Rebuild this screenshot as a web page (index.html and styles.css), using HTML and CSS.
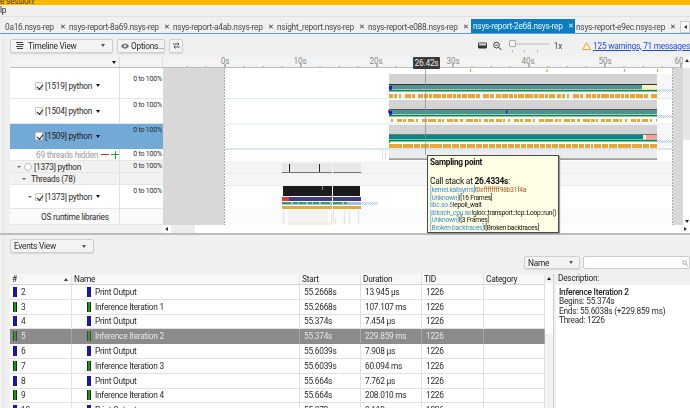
FILE: index.html
```html
<!DOCTYPE html>
<html lang="en">
<head>
<meta charset="utf-8">
<title>Nsight Systems</title>
<link rel="stylesheet" href="styles.css">
</head>
<body>
<div class="app">
  <div class="titlebar"><span>e session!</span></div>
  <div class="menubar">lp</div>
  <div class="tabs">
    <div class="tab t1"><span>0a16.nsys-rep</span><i>✕</i></div>
    <div class="tab t2"><span>nsys-report-8a69.nsys-rep</span><i>✕</i></div>
    <div class="tab t2"><span>nsys-report-a4ab.nsys-rep</span><i>✕</i></div>
    <div class="tab t3"><span>nsight_report.nsys-rep</span><i>✕</i></div>
    <div class="tab t2"><span>nsys-report-e088.nsys-rep</span><i>✕</i></div>
    <div class="tab active"><span>nsys-report-2e68.nsys-rep</span><i>✕</i></div>
    <div class="tab t2"><span>nsys-report-e9ec.nsys-rep</span><i>✕</i></div>
    <div class="tabnext"><b class="caret-left"></b></div>
  </div>
  <div class="main">
    <div class="toolbar">
      <div class="btn timeline-btn">
        <svg class="ic" width="8" height="7" viewBox="0 0 8 7"><path d="M0 .5h7M1 2.500h7M0 4.500h7M1 6.500h6" stroke="#444" fill="none"/></svg>
        <span>Timeline View</span><b class="caret"></b>
      </div>
      <div class="btn options-btn">
        <svg class="ic" width="8" height="6" viewBox="0 0 8 6"><path d="M0 3c2-3.500 6-3.500 8 0-2 3.500-6 3.500-8 0z" fill="#777"/><circle cx="4" cy="3" r="1.200" fill="#eee"/></svg>
        <span>Options...</span>
      </div>
      <div class="btn swap-btn">
        <svg width="7" height="7" viewBox="0 0 7 7"><path d="M0 2h6M4.500.5 6 2 4.500 3.500M7 5H1M2.500 3.500 1 5l1.500 1.500" stroke="#333" stroke-width=".8" fill="none"/></svg>
      </div>
      <div class="tool-right">
        <svg width="10" height="7" viewBox="0 0 10 7"><rect width="10" height="7" rx="1.500" fill="#333"/><rect x="1" y="1" width="8" height="2.500" fill="#ccc"/></svg>
        <svg class="mag" width="10" height="10" viewBox="0 0 10 10"><circle cx="4" cy="4" r="3.200" fill="#fff" stroke="#222"/><path d="M2.500 4h3M6.500 6.500 9.500 9.500" stroke="#222" stroke-width="1.100"/></svg>
        <div class="slider"><span class="knob"></span><span class="ticks"></span></div>
        <span class="zoomx">1x</span>
        <svg class="warn" width="9" height="8" viewBox="0 0 9 8"><path d="M4.500.7 8.500 7.500H.5z" fill="#fff3d6" stroke="#e8a33a"/></svg>
        <a class="warnlink">125 warnings, 71 messages</a>
      </div>
    </div>
    <div class="timeline">
      <div class="tl-left">
        <div class="tl-head"><div class="hc1"><b class="caret dark"></b></div><div class="hc2"></div></div>
        <div class="tl-gap"><div></div><div></div></div>
        <div class="row h26"><div class="lab ind35"><span class="cb"></span><span>[1519] python</span><b class="caret dark"></b></div><div class="pct">0 to 100%</div></div>
        <div class="row h25"><div class="lab ind35"><span class="cb"></span><span>[1504] python</span><b class="caret dark"></b></div><div class="pct">0 to 100%</div></div>
        <div class="row h25 sel"><div class="lab ind35"><span class="cb"></span><span>[1509] python</span><b class="caret dark"></b></div><div class="pct">0 to 100%</div></div>
        <div class="row h12"><div class="lab hiddenrow"><span>69 threads hidden</span><span class="minus"></span><span class="plus"></span></div><div class="pct">0 to 100%</div></div>
        <div class="row h12 alt"><div class="lab ind17"><b class="caret small"></b><span class="radio"></span><span>[1373] python</span></div><div class="pct">0 to 100%</div></div>
        <div class="row h12 alt"><div class="lab ind23"><b class="caret small"></b><span>Threads (78)</span></div><div class="pct"></div></div>
        <div class="row h24"><div class="lab ind28"><b class="caret small"></b><span class="cb"></span><span>[1373] python</span><b class="caret dark"></b></div><div class="pct">0 to 100%</div></div>
        <div class="row h16 pale"><div class="lab ind41"><span>OS runtime libraries</span></div><div class="pct"></div></div>
      </div>
      <svg class="canvas" width="520" height="168" viewBox="163 57 520 168">
        <defs>
          <pattern id="chk" width="2" height="2" patternUnits="userSpaceOnUse"><rect width="2" height="2" fill="#eef4f9"/><rect width="1" height="1" fill="#b9d2e6"/><rect x="1" y="1" width="1" height="1" fill="#b9d2e6"/></pattern>
        </defs>
        <rect x="163" y="57" width="520" height="168" fill="#fff"/>
        <rect x="163" y="57" width="520" height="11" fill="#f3f3f3"/>
        <path d="M163 67.500h520" stroke="#bdbdbd"/>
        <path d="M187 67v-1M206 67v-1M244 67v-1M263 67v-1M282 67v-1M320 67v-1M339 67v-1M358 67v-1M396 67v-1M415 67v-1M434 67v-1M472 67v-1M491 67v-1M510 67v-1M548 67v-1M567 67v-1M586 67v-1M624 67v-1M643 67v-1M662 67v-1" stroke="#9a9a9a"/>
        <path d="M225 67v-3M301 67v-3M377 67v-3M453 67v-3M529 67v-3M605 67v-3M681 67v-3" stroke="#777"/>
        <g class="ax">
          <text x="225" y="63.500" text-anchor="middle">0s</text>
          <text x="300" y="63.500" text-anchor="middle">10s</text>
          <text x="376" y="63.500" text-anchor="middle">20s</text>
          <text x="453" y="63.500" text-anchor="middle">30s</text>
          <text x="528" y="63.500" text-anchor="middle">40s</text>
          <text x="605" y="63.500" text-anchor="middle">50s</text>
          <text x="679" y="63.500" text-anchor="middle">60</text>
        </g>
        <rect x="163" y="68" width="61" height="157" fill="#d8d8d8"/>
        <rect x="673" y="68" width="10" height="157" fill="#d8d8d8"/>
        <path d="M224.500 68v157M672.500 68v157" stroke="#a8a8a8" stroke-dasharray="2 1"/>
        <rect x="225" y="161" width="447" height="24" fill="#f5f5f5"/>
        <rect x="225" y="209" width="447" height="16" fill="#fbfbfb"/>
        <rect x="657" y="74" width="15" height="24" fill="#f7f7f7"/>
        <rect x="657" y="125" width="15" height="23" fill="#f7f7f7"/>
        <path d="M225 98.500h447M225 124h447" stroke="#e3e9f0"/>
        <path d="M225 149h447" stroke="#dbe5ef" stroke-width="2"/>
        <path d="M225 173.500h447M225 185.500h447" stroke="#ececec"/>
        <path d="M470.500 69v3M547 69v3M624.500 69v3M657.500 69v3" stroke="#e8a838" stroke-width="1.300"/>
        <rect x="389" y="74" width="268" height="10" fill="#d4d4d4"/>
        <rect x="389" y="84" width="268" height="1" fill="#333"/>
        <rect x="389" y="85" width="268" height="4.500" fill="#4e9394"/>
        <rect x="642" y="85" width="15" height="4.500" fill="#fbeec4"/>
        <rect x="389" y="90" width="268" height="1.500" fill="#0d8a3c"/>
        <rect x="657" y="89" width="15" height="3" fill="url(#chk)"/>
        <path d="M389 86v3l1.500 1.500L392 89v-3z" fill="#1616e0"/>
        <path d="M389 96h268" stroke="#e8a838" stroke-width="4" stroke-dasharray="4 1 3 2 2 4 6 1 3 3 5 1 4 1 3 1 8 1 4 1 5 1 3 1 4 1 5 1 7 1 4 3 6 1 4 2 5 1 6 1 4 1 3 1 6 1 8 1 4 1 5 1 3 1 6 2"/>
        <rect x="389" y="100" width="268" height="9" fill="#d4d4d4"/>
        <rect x="389" y="109" width="268" height="1" fill="#555"/>
        <rect x="389" y="110" width="268" height="4.500" fill="#4e9394"/>
        <rect x="389" y="115" width="268" height="1.500" fill="#0d8a3c"/>
        <rect x="657" y="115" width="15" height="3" fill="url(#chk)"/>
        <rect x="388" y="110" width="2" height="3" fill="#e03030"/>
        <path d="M389 111v3l1.500 1.500L392 114v-3z" fill="#1616e0"/>
        <rect x="506" y="110.500" width="1.300" height="3" fill="#1616e0"/>
        <path d="M391 120.500h266" stroke="#e8a838" stroke-width="3" stroke-dasharray="2 4 5 1 3 2 6 2 2 4 5 1 8 2 3 1 2 3 6 1 4 2 3 3 7 1 4 1 2 3 4 1 5 2 6 1 2 3"/>
        <rect x="389" y="125" width="268" height="9" fill="#d4d4d4"/>
        <rect x="389" y="134" width="268" height="1" fill="#777"/>
        <rect x="389" y="135" width="268" height="4.500" fill="#008a8a"/>
        <rect x="643" y="135" width="3" height="4.500" fill="#fbeec4"/>
        <rect x="646" y="135" width="11" height="4.500" fill="#f8a0a0"/>
        <rect x="389" y="140" width="268" height="1.500" fill="#0d8a3c"/>
        <rect x="389" y="140" width="1" height="3" fill="#0d8a3c"/>
        <rect x="657" y="140" width="15" height="3" fill="url(#chk)"/>
        <path d="M389 146h268" stroke="#e8a838" stroke-width="4" stroke-dasharray="13 1 10 1 6 1 8 1 12 1 8 1 7 1 6 1 8 1 6 1 5 1 6 1 5 1 5 1 6 1 5 1 5 1 6 1 5 1 5 1 5 1 6 1 6 1 5 1 6 1 5 1 5 1 2 1 7 1 6 1 8 1"/>
        <rect x="389" y="150" width="268" height="8.500" fill="#ececec"/>
        <rect x="389" y="158.500" width="268" height="1.200" fill="#777"/>
        <path d="M382.500 150v9M385.500 150v9" stroke="#e2e2e2"/>
        <rect x="282" y="163" width="50" height="9" fill="#e8e8e8"/>
        <rect x="333" y="163" width="28" height="9" fill="#e8e8e8"/>
        <rect x="282" y="172" width="50" height="1" fill="#777"/>
        <rect x="333" y="172" width="28" height="1" fill="#777"/>
        <path d="M289.500 164v8M319.500 164v8" stroke="#222"/>
        <rect x="283" y="186" width="49" height="10" fill="#1c1c1c"/>
        <rect x="333" y="186" width="27" height="10" fill="#1c1c1c"/>
        <rect x="322" y="186" width="1" height="4" fill="#888"/>
        <rect x="282" y="197" width="50" height="4" fill="#3e3a8c"/>
        <rect x="333" y="197" width="28" height="4" fill="#3e3a8c"/>
        <rect x="282" y="197" width="7" height="4" fill="#e83434"/>
        <rect x="282" y="202" width="50" height="3" fill="#9cc4dc"/>
        <rect x="333" y="202" width="28" height="3" fill="#9cc4dc"/>
        <path d="M282 203h50M333 203h14" stroke="#0f9040" stroke-width="1.500" stroke-dasharray="9 2 5 1 7 2 4 1 6 2"/>
        <rect x="361" y="202" width="17" height="3" fill="url(#chk)"/>
        <rect x="282" y="206" width="50" height="3" fill="#e8a838"/>
        <rect x="333" y="206" width="28" height="3" fill="#e8a838"/>
        <path d="M283.500 210v14M333.500 210v14M344.500 210v14M349.500 210v14M358.500 210v14" stroke="#e6e6e6" stroke-width="1.500"/>
        <rect x="288" y="210" width="40" height="14" fill="#f4f3f1"/>
        <path d="M288 224h44" stroke="#efe6d6"/>
        <path d="M331.500 224v-11M335.500 224v-5" stroke="#efe4d2"/>
        <path d="M425.500 68v87" stroke="#8a8a8a" stroke-width=".7"/>
      </svg>
      <div class="vscroll">
        <b class="up"></b>
        <div class="vthumb"></div>
        <b class="down"></b>
      </div>
      <div class="timebadge">26.42s</div>
      <div class="tooltip">
        <div class="tt-title">Sampling point</div>
        <div class="tt-head">Call stack at <b>26.4334s</b>:</div>
        <div class="tt-line"><a>[kernel.kallsyms]</a>!<em>0xffffffff98b31f4a</em></div>
        <div class="tt-line"><a>[Unknown]</a>![16 Frames]</div>
        <div class="tt-line"><a>libc.so.6</a>!epoll_wait</div>
        <div class="tt-line"><a>libtorch_cpu.so</a>!gloo::transport::tcp::Loop::run()</div>
        <div class="tt-line"><a>[Unknown]</a>![3 Frames]</div>
        <div class="tt-line"><a>[Broken backtraces]</a>![Broken backtraces]</div>
      </div>
    </div>
    <div class="hscroll">
      <div class="hs-blank"></div>
      <b class="caret-left"></b>
      <div class="hs-thumb"></div>
      <div class="hs-track"></div>
      <b class="caret-right"></b>
    </div>
    <div class="splitter"></div>
    <div class="events-bar">
      <div class="btn events-btn"><span>Events View</span><b class="caret"></b></div>
      <div class="filter-bar">
        <div class="btn name-btn"><span>Name</span><b class="caret"></b></div>
        <div class="search"><svg width="6" height="6" viewBox="0 0 6 6"><circle cx="2.500" cy="2.500" r="1.800" fill="none" stroke="#9ab"/><path d="M4 4l2 2" stroke="#9ab"/></svg></div>
      </div>
    </div>
    <div class="lower">
      <div class="table">
        <div class="tr th"><div class="c0">#<b class="sort"></b></div><div class="c1">Name</div><div class="c2">Start</div><div class="c3">Duration</div><div class="c4">TID</div><div class="c5">Category</div></div>
        <div class="tr"><div class="c0"><span class="ev blue"></span>2</div><div class="c1"><span class="ev blue"></span>Print Output</div><div class="c2">55.2668s</div><div class="c3">13.945 μs</div><div class="c4">1226</div><div class="c5"></div></div>
        <div class="tr"><div class="c0"><span class="ev green"></span>3</div><div class="c1"><span class="ev green"></span>Inference Iteration 1</div><div class="c2">55.2668s</div><div class="c3">107.107 ms</div><div class="c4">1226</div><div class="c5"></div></div>
        <div class="tr"><div class="c0"><span class="ev blue"></span>4</div><div class="c1"><span class="ev blue"></span>Print Output</div><div class="c2">55.374s</div><div class="c3">7.454 μs</div><div class="c4">1226</div><div class="c5"></div></div>
        <div class="tr selrow"><div class="c0"><span class="ev green"></span>5</div><div class="c1"><span class="ev green"></span>Inference Iteration 2</div><div class="c2">55.374s</div><div class="c3">229.859 ms</div><div class="c4">1226</div><div class="c5"></div></div>
        <div class="tr"><div class="c0"><span class="ev blue"></span>6</div><div class="c1"><span class="ev blue"></span>Print Output</div><div class="c2">55.6039s</div><div class="c3">7.908 μs</div><div class="c4">1226</div><div class="c5"></div></div>
        <div class="tr"><div class="c0"><span class="ev green"></span>7</div><div class="c1"><span class="ev green"></span>Inference Iteration 3</div><div class="c2">55.6039s</div><div class="c3">60.094 ms</div><div class="c4">1226</div><div class="c5"></div></div>
        <div class="tr"><div class="c0"><span class="ev blue"></span>8</div><div class="c1"><span class="ev blue"></span>Print Output</div><div class="c2">55.664s</div><div class="c3">7.762 μs</div><div class="c4">1226</div><div class="c5"></div></div>
        <div class="tr"><div class="c0"><span class="ev green"></span>9</div><div class="c1"><span class="ev green"></span>Inference Iteration 4</div><div class="c2">55.664s</div><div class="c3">208.010 ms</div><div class="c4">1226</div><div class="c5"></div></div>
        <div class="tr"><div class="c0"><span class="ev blue"></span>10</div><div class="c1"><span class="ev blue"></span>Print Output</div><div class="c2">55.872s</div><div class="c3">8.112 μs</div><div class="c4">1226</div><div class="c5"></div></div>
      </div>
      <div class="tscroll"><b class="up"></b><div class="tthumb"></div><div class="ttrack"></div></div>
      <div class="desc">
        <div class="desc-head">Description:</div>
        <div class="desc-body">
          <div class="desc-title">Inference Iteration 2</div>
          <div>Begins: 55.374s</div>
          <div>Ends: 55.6038s (+229.859 ms)</div>
          <div>Thread: 1226</div>
        </div>
      </div>
    </div>
  </div>
</div>
</body>
</html>
```
FILE: styles.css
```css
* { box-sizing: border-box; }
html, body { margin: 0; padding: 0; height: 100%; overflow: hidden; }
body { background: #f0f0f0; font-family: Roboto, "Liberation Sans", sans-serif; font-size: 8.300px; letter-spacing: -.24px; color: #2a2a2a; }
.app { width: 690px; height: 408px; display: flex; flex-direction: column; overflow: hidden; filter: blur(.3px); }

.titlebar { height: 5px; background: #ffb900; overflow: hidden; line-height: 2px; color: #4a3a10; flex: none; }
.menubar { height: 12px; line-height: 10px; color: #222; border-bottom: 1px solid #e2e2e2; flex: none; }

.tabs { height: 17px; flex: none; display: flex; align-items: stretch; padding-top: 4px; border-bottom: 1px solid #5f9fcf; overflow: hidden; }
.tab { display: flex; align-items: center; color: #4a4a4a; flex: none; white-space: nowrap; }
.tab i { font-style: normal; font-size: 6.500px; color: #333; margin-left: 5px; }
.t1 { width: 69px; padding-left: 5px; }
.t2 { width: 104px; }
.t3 { width: 91px; }
.t1 i { margin-left: 6px; }
.tab.active { width: 104px; padding-left: 2px; margin-top: -2px; background: #0b7dc2; color: #eef7ff; margin-left: -1px; margin-right: 1px; }
.tab.active i { color: #eef7ff; }
.tabnext { width: 10px; margin-left: auto; background: #fafafa; border: 1px solid #ccc; display: flex; align-items: center; justify-content: center; flex: none; }

.main { flex: 1; position: relative; padding-left: 10px; min-height: 0; background: linear-gradient(#e4e4e4, #e4e4e4) 3px 0 / 1px 100% no-repeat; }
.toolbar { height: 23px; display: flex; align-items: center; gap: 4px; }
.btn { height: 14px; display: flex; align-items: center; background: #f3f3f3; border: 1px solid #cfcfcf; border-radius: 2px; box-shadow: 0 1px 1px #d8d8d8; color: #2a2a2a; }
.timeline-btn { width: 103px; padding: 0 7px 0 5px; }
.timeline-btn .ic { margin-right: 4px; }
.timeline-btn .caret { margin-left: auto; }
.options-btn { width: 48px; padding-left: 3px; }
.options-btn .ic { margin-right: 2px; }
.swap-btn { width: 14px; justify-content: center; }
.tool-right { margin-left: auto; display: flex; align-items: center; width: 212px; white-space: nowrap; overflow: hidden; }
.mag { margin-left: 6px; }
.slider { position: relative; width: 45px; height: 12px; margin-left: 7px; background: linear-gradient(#d6d6d6, #d6d6d6) center 3px / 100% 2px no-repeat; }
.knob { position: absolute; left: 0; top: 0; width: 7px; height: 7px; background: #f6f6f6; border: 1px solid #aaa; border-radius: 1px; }
.ticks { position: absolute; left: 3px; right: 3px; bottom: 0; height: 2px; background: repeating-linear-gradient(90deg, #aaa 0 1px, transparent 1px 12.400px); }
.zoomx { margin-left: 5px; color: #444; }
.warn { margin-left: 20px; flex: none; }
.warnlink { margin-left: 2px; color: #1f4fd8; text-decoration: underline; }

.timeline { position: relative; height: 168px; display: flex; background: #fff; }
.tl-left { width: 153px; flex: none; display: flex; flex-direction: column; background: #fff; }
.tl-head { height: 11px; display: flex; background: #f3f3f3; border-bottom: 1px solid #bdbdbd; }
.hc1 { width: 110px; border-right: 1px solid #dcdcdc; display: flex; align-items: center; justify-content: flex-end; padding-right: 3px; }
.hc2 { flex: 1; border-right: 1px solid #dcdcdc; }
.tl-gap { height: 5px; display: flex; }
.tl-gap div:first-child { width: 110px; border-right: 1px solid #e4e4e4; }
.row { display: flex; border-bottom: 1px solid #e6e6e6; flex: none; }
.h26 { height: 26px; } .h25 { height: 25px; } .h12 { height: 12px; } .h24 { height: 24px; } .h16 { height: 16px; }
.lab { width: 110px; flex: none; display: flex; align-items: center; border-right: 1px solid #e0e0e0; white-space: nowrap; }
.pct { flex: 1; text-align: right; font-size: 7px; letter-spacing: -.2px; line-height: 9px; padding: 2px 1px 0 0; }
.row.h12 .pct { padding-top: 1px; }
.sel { background: #73a9d6; border-bottom-color: #73a9d6; }
.sel .lab { border-right-color: #73a9d6; color: #222; }
.alt { background: #f2f2f2; }
.pale { background: #fafafa; }
.ind35 { padding-left: 25px; }
.ind17 { padding-left: 7px; }
.ind23 { padding-left: 12px; }
.ind28 { padding-left: 18px; }
.ind41 { padding-left: 31px; }
.cb { width: 8px; height: 8px; margin-right: 2px; flex: none; background: #fff; border: 1px solid #c4c4c4; border-radius: 1px; position: relative; }
.cb::after { content: ""; position: absolute; left: 2px; top: 0; width: 2.500px; height: 5px; border: solid #111; border-width: 0 1.200px 1.200px 0; transform: rotate(38deg); }
.radio { width: 8px; height: 8px; margin: 0 2px 0 0; border-radius: 50%; background: #fff; border: 1px solid #bbb; flex: none; }
.hiddenrow { padding-left: 26px; color: #9a9a9a; }
.minus { width: 8px; height: 1px; background: #d8261c; margin-left: 3px; }
.plus { width: 8px; height: 8px; margin-left: 2px; background: linear-gradient(#2e9e3e, #2e9e3e) center / 100% 1px no-repeat, linear-gradient(#2e9e3e, #2e9e3e) center / 1px 100% no-repeat; }

.caret { width: 0; height: 0; border: 2.500px solid transparent; border-top: 3px solid #555; border-bottom: 0; margin-left: 5px; flex: none; }
.caret.dark { border-top-color: #111; margin-left: 4px; }
.caret.small { border-width: 2px; border-top: 2.500px solid #666; border-bottom: 0; margin: 0 3px 0 0; }
.ind23 .caret.small { margin-right: 5px; }
.caret-left { width: 0; height: 0; border: 2.500px solid transparent; border-right: 3px solid #333; border-left: 0; flex: none; }
.caret-right { width: 0; height: 0; border: 2.500px solid transparent; border-left: 3px solid #333; border-right: 0; flex: none; }
.up { display: block; width: 0; height: 0; border: 2.500px solid transparent; border-bottom: 3px solid #222; border-top: 0; }
.down { display: block; width: 0; height: 0; border: 2.500px solid transparent; border-top: 3px solid #222; border-bottom: 0; }

.canvas { flex: none; display: block; }
.ax text { font-family: Roboto, "Liberation Sans", sans-serif; font-size: 8.200px; letter-spacing: -.2px; fill: #8a8a8a; }
.vscroll { flex: 1; display: flex; flex-direction: column; align-items: center; background: #fff; padding: 2px 0; }
.vthumb { width: 100%; height: 72px; margin-top: 6px; background: #e6e6e6; }
.vscroll .down { margin-top: auto; }

.timebadge { position: absolute; left: 403px; top: 0; width: 27px; height: 12px; background: #3a3a3a; color: #ececec; font-size: 8.400px; line-height: 12px; text-align: center; border-radius: 1px; }
.tooltip { position: absolute; left: 417px; top: 98px; width: 132px; height: 78px; z-index: 2; padding: 1px 2px; background: #ffffe6; border: 1px solid #4a4a4a; box-shadow: 1px 1px 1px #999; color: #111; white-space: nowrap; overflow: hidden; }
.tt-title { font-weight: 700; font-size: 8.200px; line-height: 11px; }
.tt-head { font-size: 8.400px; line-height: 11px; margin-top: 8px; }
.tt-head b { font-weight: 700; }
.tt-line { font-size: 6.700px; letter-spacing: -.26px; line-height: 7.600px; }
.tt-line a { color: #3f8fd0; }
.tt-line em { font-style: normal; color: #b3541e; }

.hscroll { height: 8px; display: flex; align-items: center; background: #fff; }
.hs-blank { width: 153px; height: 100%; background: #f2f2f2; flex: none; }
.hscroll .caret-left { margin-left: 2px; }
.hs-thumb { width: 24px; height: 100%; margin-left: 3px; background: #ececec; flex: none; }
.hs-track { flex: 1; height: 100%; background: #fff; }
.hscroll .caret-right { margin: 0 3px; }
.splitter { height: 2px; margin-left: -10px; background: #bcbcbc; }

.events-bar { height: 39px; padding: 4px 0 5px; display: flex; justify-content: space-between; align-items: flex-start; }
.events-btn { width: 84px; padding: 0 7px 0 3px; height: 14px; }
.events-btn .caret { margin-left: auto; }
.filter-bar { align-self: flex-end; display: flex; gap: 3px; }
.name-btn { width: 56px; height: 13px; padding: 0 6px 0 3px; color: #222; }
.name-btn .caret { margin-left: auto; }
.search { width: 107px; height: 13px; background: #fff; border: 1px solid #ccc; border-radius: 2px; display: flex; align-items: center; justify-content: flex-end; padding-right: 1px; }

.lower { display: flex; height: 134px; overflow: hidden; }
.table { width: 535px; flex: none; background: #fff; }
.tr { display: grid; grid-template-columns: 62px 228px 61px 61px 62px 61px; height: 14.800px; border-bottom: 1px solid #e0e0e0; }
.tr > div { display: flex; align-items: center; padding-left: 3px; border-right: 1px solid #e0e0e0; white-space: nowrap; }
.tr .c2, .tr .c3, .tr .c4 { padding-left: 4px; }
.tr .c1 { padding-left: 15px; }
.th { height: 11px; background: #f7f7f7; border-bottom: 1px solid #d4d4d4; color: #222; }
.th > div { padding-left: 2px !important; border-right-color: #e2e2e2; }
.th .c0 { justify-content: space-between; padding-right: 3px; }
.sort { width: 0; height: 0; border: 2.500px solid transparent; border-bottom: 3px solid #333; border-top: 0; }
.selrow { background: #8b8b8b; color: #e6e6e6; border-bottom-color: #8b8b8b; }
.selrow > div { border-right-color: #a8a8a8; }
.selrow .ev { opacity: .7; }
.ev { display: inline-block; width: 4px; height: 10px; margin-right: 4px; flex: none; border: 1px solid #222; border-width: 0 1px; }
.blue { background: #1212e6; }
.green { background: #0fa00f; }
.tscroll { width: 9px; flex: none; display: flex; flex-direction: column; align-items: center; background: #f2f2f2; border-right: 1px solid #d0d0d0; padding-top: 3px; }
.tthumb { width: 100%; height: 51px; margin-top: 3px; background: #fff; }
.ttrack { flex: 1; }
.desc { flex: 1; margin-left: 2px; display: flex; flex-direction: column; }
.desc-head { height: 11px; line-height: 9px; padding-left: 2px; }
.desc-body { flex: 1; background: #fff; padding: 3px 3px; line-height: 9.300px; white-space: nowrap; }
.desc-title { font-weight: 500; color: #222; }
```
